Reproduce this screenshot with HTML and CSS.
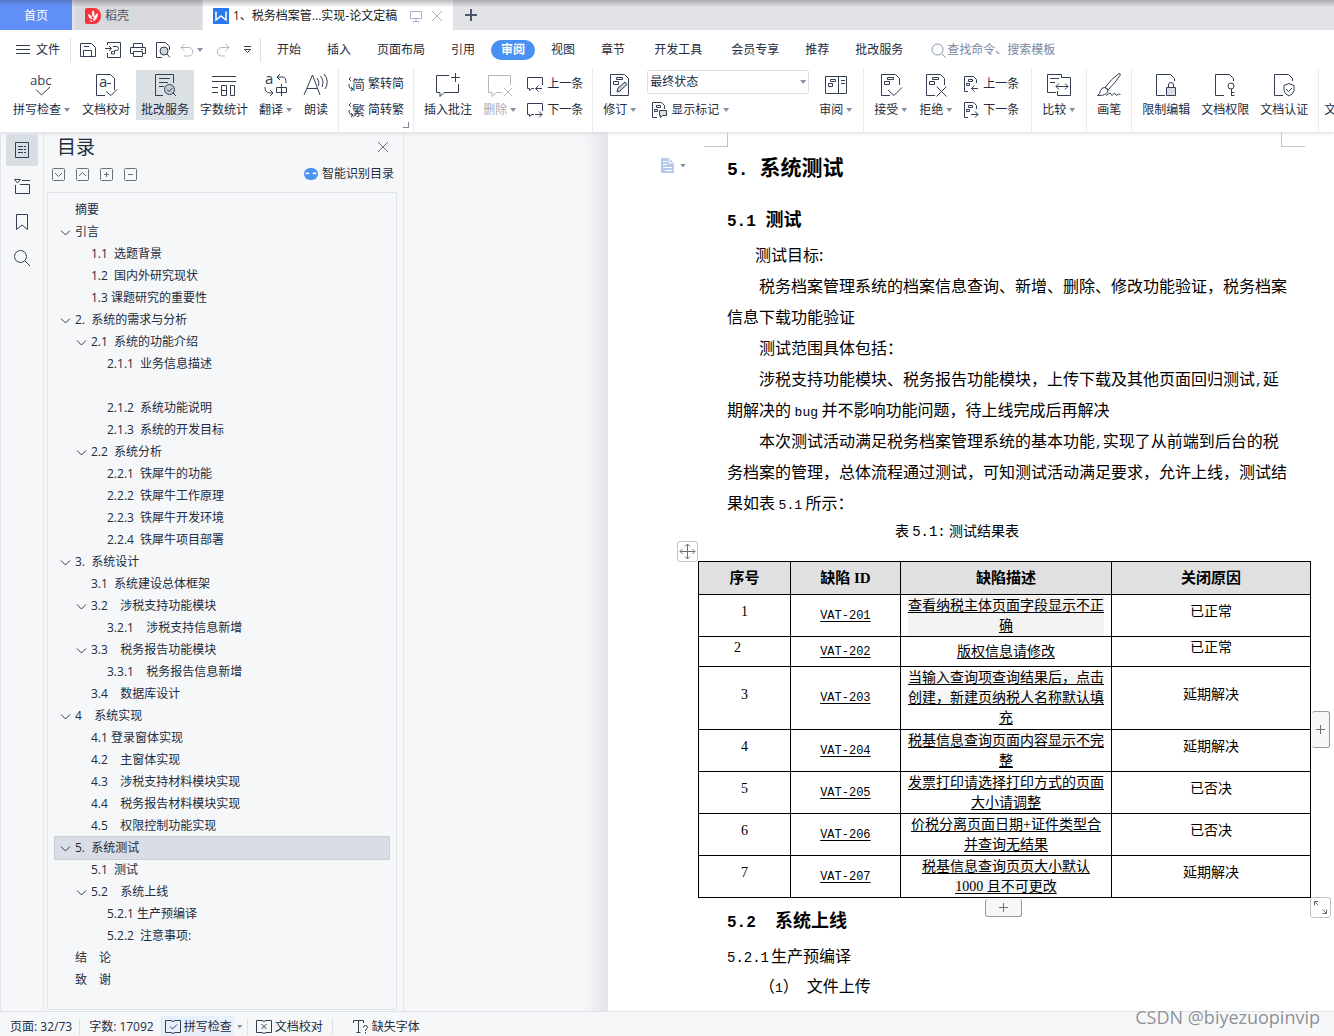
FILE: index.html
```html
<!DOCTYPE html>
<html lang="zh-CN">
<head>
<meta charset="utf-8">
<title>税务档案管理系统 - 论文定稿</title>
<link rel="stylesheet" href="styles.css">
</head>
<body>
<svg class="defs" aria-hidden="true">
  <symbol id="i-doc" viewBox="0 0 24 24"><path d="M11 22.500H2.500V1.500h14l4 4V12"/><path d="M5.500 8.500h5v3h-5zM8.500 4.500h6v2h-6z"/></symbol>
  <symbol id="i-page" viewBox="0 0 24 24"><path d="M11 22.500H2.500V1.500h14l4 4V8"/></symbol>
  <symbol id="i-chev" viewBox="0 0 16 16"><path d="M4 6.500l4.500 4.500L13 6.500"/></symbol>
  <symbol id="i-prev" viewBox="0 0 16 16"><path d="M7 12.500H5l-2.500 2v-2H.5V1.500h15V9M15 12.500H8.500M11.500 9.500l-3 3 3 3"/></symbol>
  <symbol id="i-next" viewBox="0 0 16 16"><path d="M7 12.500H5l-2.500 2v-2H.5V1.500h15V9M8 12.500h7M12 9.500l3 3-3 3"/></symbol>
  <symbol id="i-dprev" viewBox="0 0 16 16"><path d="M5 15.500H1.500V.5h9l3 3V7M5.500 3.500h4v2h-4zM3.500 7.500h3v2h-3zM15 12.500H8.500M11.500 9.500l-3 3 3 3"/></symbol>
  <symbol id="i-dnext" viewBox="0 0 16 16"><path d="M5 15.500H1.500V.5h9l3 3V7M5.500 3.500h4v2h-4zM3.500 7.500h3v2h-3zM8 12.500h7M12 9.500l3 3-3 3"/></symbol>
</svg>

<header>
  <nav class="tabs">
    <button class="tab tab-home">首页</button>
    <button class="tab tab-docer">
      <svg width="16" height="16" viewBox="0 0 16 16"><path d="M0 2q0-2 2-2h7a7 8 0 0 1 0 16H2q-2 0-2-2z" fill="#f5313c"/><path d="M8 2c2 2 2 5 .3 7.500C6.500 7 6.500 4.500 8 2zM3 6c2.500.5 4 2.500 4.500 5.500C5 11 3 9 3 6zM13 5c0 4-1.500 7-5 8.500 0-4 2-7 5-8.500zM4 11.500l4 2.500H6z" fill="#fff"/></svg>稻壳
    </button>
    <div class="tab tab-current">
      <svg width="16" height="16" viewBox="0 0 16 16"><path d="M0 0h16v16H0z" fill="#2878ee"/><path d="M3 3.500v8.500l5-4 5 4V3.500M8 8v0" fill="none" stroke="#fff" stroke-width="1.500"/></svg>
      <span class="tab-title">1、税务档案管...实现-论文定稿</span>
      <svg class="line pale" width="12" height="12" viewBox="0 0 12 12"><path d="M.5 1.500h11v7H.5zM6 8.500v3M3 11.500h6"/></svg>
      <button class="plain" aria-label="关闭标签"><svg class="line pale" width="12" height="12" viewBox="0 0 12 12"><path d="M1 1l10 10M11 1L1 11"/></svg></button>
    </div>
    <button class="plain tab-new" aria-label="新建标签"><svg width="12" height="12" viewBox="0 0 12 12"><path d="M6 0v12M0 6h12" stroke="#4b5670" stroke-width="2"/></svg></button>
  </nav>

  <div class="menubar">
    <button class="plain file"><svg class="line" width="14" height="12" viewBox="0 0 14 12"><path d="M0 1.500h14M0 5.500h14M0 9.500h14"/></svg>文件</button>
    <div class="quick">
      <button class="plain" aria-label="保存"><svg class="line" width="16" height="16" viewBox="0 0 16 16"><path d="M.5 1.500h11l4 4v9H.5zM3.500 14V8.500h8V14M4 4.500h5"/></svg></button>
      <button class="plain" aria-label="输出为PDF"><svg class="line" width="16" height="16" viewBox="0 0 16 16"><path d="M2.500 3V.5h13v15h-13V11M0 6.500h6M4 4l2.500 2.500L4 9M8 4.500h3.500a2 2 0 0 1 0 4H9.500V12H6.500V9.500h2"/></svg></button>
      <button class="plain" aria-label="打印"><svg class="line" width="16" height="16" viewBox="0 0 16 16"><path d="M3.500 5V1.500h9V5M3 11.500H.5v-6h15v6H13M3.500 9.500h9v5h-9zM11 7.500h2"/></svg></button>
      <button class="plain" aria-label="打印预览"><svg class="line" width="16" height="16" viewBox="0 0 16 16"><path d="M7 15.500H1.500V.5h9l4 4V8"/><circle cx="9" cy="9" r="4" fill="#cfd4dc"/><path d="M12 12l3 3.500"/></svg></button>
      <button class="plain undo" aria-label="撤销"><svg class="line grey" width="14" height="14" viewBox="0 0 14 14"><path d="M4.500 1L1 4.500 4.500 8M1 4.500h7.500a4.200 4.200 0 0 1 0 8.500H4"/></svg><i class="caret"></i></button>
      <button class="plain redo" aria-label="恢复"><svg class="line grey" width="14" height="14" viewBox="0 0 14 14"><path d="M9.500 1L13 4.500 9.500 8M13 4.500H5.500a4.200 4.200 0 0 0 0 8.500H9"/></svg></button>
      <button class="plain" aria-label="自定义"><svg class="line" width="9" height="8" viewBox="0 0 9 8"><path d="M1 .5h7M1.500 3.500h6l-3 3z"/></svg></button>
    </div>
    <nav class="menus">
      <button class="plain">开始</button>
      <button class="plain">插入</button>
      <button class="plain">页面布局</button>
      <button class="plain">引用</button>
      <button class="plain on">审阅</button>
      <button class="plain">视图</button>
      <button class="plain">章节</button>
      <button class="plain wide">开发工具</button>
      <button class="plain">会员专享</button>
      <button class="plain">推荐</button>
      <button class="plain">批改服务</button>
    </nav>
    <label class="search">
      <svg class="line" width="15" height="15" viewBox="0 0 15 15"><circle cx="6.500" cy="6.500" r="5.500"/><path d="M10.500 10.500l4 4"/></svg>
      <input type="text" placeholder="查找命令、搜索模板" aria-label="查找命令">
    </label>
  </div>

  <div class="ribbon">
    <div class="group">
      <button class="big"><svg class="line" width="24" height="24" viewBox="0 0 24 24"><text x="0" y="12" class="glyph abc">abc</text><path d="M6 16.500l5.500 5.500L20 14"/></svg><span>拼写检查<i class="caret"></i></span></button>
      <button class="big"><svg class="line" width="24" height="24" viewBox="0 0 24 24"><path d="M11 22.500H2.500V1.500h14l4 4V17M12 18.500l5 4 6-6M13 10.500h4"/><text x="5" y="14" class="glyph">a</text></svg><span>文档校对</span></button>
      <button class="big active"><svg class="line" width="24" height="24" viewBox="0 0 24 24"><path d="M10 22.500H2.500V1.500h18V10M6 5.500h11M6 9.500h9M6 13.500h5"/><circle cx="16.500" cy="16.500" r="5" fill="#c4cbd5"/><path d="M14 16.500l2 2 3.500-3.500M20 20l3 3"/></svg><span>批改服务</span></button>
      <button class="big"><svg class="line" width="24" height="24" viewBox="0 0 24 24"><path d="M0 3.500h24M0 8.500h24M0 14.500h6M0 19.500h6M9.500 12.500h5v10h-5zM9.500 17.500h5M18.500 12.500h4v10h-4z"/></svg><span>字数统计</span></button>
      <button class="big"><svg class="line" width="24" height="24" viewBox="0 0 24 24"><text x="1" y="11" class="glyph">a</text><path d="M16 1l-3 3 3 3M13 4h6q3 0 3 6M1 14c0 5 2 6 7 6M6 17l3 3-3 3M12.500 14.500h10v5h-10zM17.500 11v12"/></svg><span>翻译<i class="caret"></i></span></button>
      <button class="big"><svg class="line" width="24" height="24" viewBox="0 0 24 24"><path d="M0 22L8.500 2 16 22M3 15.500h10.500M13 5q3 4 1.500 8M16.500 3q4 5 1.500 11M20 1q6 7 1 15"/></svg><span>朗读</span></button>
    </div>
    <div class="group stack corner">
      <button class="small"><svg class="line" width="16" height="16" viewBox="0 0 16 16"><text x="4" y="13" class="glyph cjk">简</text><path d="M3 1L1 3l2 2M1 8q0 5 3 5M3 11l2 2-2 2"/></svg>繁转简</button>
      <button class="small"><svg class="line" width="16" height="16" viewBox="0 0 16 16"><text x="4" y="13" class="glyph cjk">繁</text><path d="M3 1L1 3l2 2M1 8q0 5 3 5M3 11l2 2-2 2"/></svg>简转繁</button>
    </div>
    <div class="group">
      <button class="big"><svg class="line" width="24" height="24" viewBox="0 0 24 24"><path d="M13 2.500H.5v17H4v4l4-4h14.500V11M19.500 0v9M15 4.500h9"/></svg><span>插入批注</span></button>
      <button class="big off"><svg class="line grey" width="24" height="24" viewBox="0 0 24 24"><path d="M22.500 12V2.500H.5v17H4v4l4-4h6M16 15l8 8M24 15l-8 8"/></svg><span>删除<i class="caret"></i></span></button>
      <div class="stack">
        <button class="small"><svg class="line" width="16" height="16"><use href="#i-prev"/></svg>上一条</button>
        <button class="small"><svg class="line" width="16" height="16"><use href="#i-next"/></svg>下一条</button>
      </div>
    </div>
    <div class="group">
      <button class="big"><svg class="line" width="24" height="24" viewBox="0 0 24 24"><path d="M2.500 1.500h14l4 4v17h-18zM8.500 4.500h6v2h-6zM5.500 8.500h5v3h-5z"/><path d="M9 19l1-4 7-6 2 2.500-7 6.500z" fill="#c9ced6"/></svg><span>修订<i class="caret"></i></span></button>
      <div class="stack marks">
        <span class="picker"><select aria-label="显示状态"><option>最终状态</option></select><i class="caret"></i></span>
        <button class="small"><svg class="line" width="16" height="16" viewBox="0 0 16 16"><path d="M6 15.500H1.500V.5h9l3 3V7M5.500 3.500h4v2h-4zM3.500 7.500h3v2h-3z"/><path d="M8.500 8.500h7v5h-4l-2 2v-2h-1z" fill="#d9dde3"/></svg>显示标记<i class="caret"></i></button>
      </div>
      <button class="big review"><svg class="line" width="24" height="24" viewBox="0 0 24 24"><path d="M1.500 3.500h21v17h-21zM14.500 3v18M6.500 6.500h5v2h-5zM4.500 10.500h4v3h-4zM17 7.500h4M17 10.500h4"/></svg><span>审阅<i class="caret"></i></span></button>
    </div>
    <div class="group">
      <button class="big"><svg class="line" width="24" height="24" viewBox="0 0 24 24"><use href="#i-doc"/><path d="M9 17l6 5.500 8-8"/></svg><span>接受<i class="caret"></i></span></button>
      <button class="big"><svg class="line" width="24" height="24" viewBox="0 0 24 24"><use href="#i-doc"/><path d="M12.500 13.500l10 10M22.500 13.500l-10 10"/></svg><span>拒绝<i class="caret"></i></span></button>
      <div class="stack far">
        <button class="small"><svg class="line" width="16" height="16"><use href="#i-dprev"/></svg>上一条</button>
        <button class="small"><svg class="line" width="16" height="16"><use href="#i-dnext"/></svg>下一条</button>
      </div>
    </div>
    <div class="group">
      <button class="big"><svg class="line" width="24" height="24" viewBox="0 0 24 24"><path d="M9 19.500H.5v-18h14V5M3 5.500h9M3 9.500h5M14 4.500h9.500v18h-13V18M9 13.500h12M12 10.500l-3 3 3 3M18 10.500l3 3-3 3"/></svg><span>比较<i class="caret"></i></span></button>
    </div>
    <div class="group">
      <button class="big"><svg class="line" width="24" height="24" viewBox="0 0 24 24"><path d="M8 14.500Q14 6 22 .5q2 0 1 2Q18 10 11 17z"/><path d="M7.500 14.500q3.500 0 3.500 3.500-2 5-10.500 4.500 3-2 3-5 1-3 4-3zM9 22.500l4-2.500 2 2.500 2.500-2.500 2 2.500 2-1.500 2 .5"/></svg><span>画笔</span></button>
    </div>
    <div class="group">
      <button class="big"><svg class="line" width="24" height="24" viewBox="0 0 24 24"><use href="#i-page"/><path d="M12.500 14.500h9v8h-9z" fill="#d9dde3"/><path d="M14.500 14v-2q0-2.500 2.500-2.500t2.500 2.500v2"/></svg><span>限制编辑</span></button>
      <button class="big"><svg class="line" width="24" height="24" viewBox="0 0 24 24"><use href="#i-page"/><circle cx="18" cy="13" r="3"/><path d="M18.500 16v7M18.500 19.500h3M18.500 22.500h3"/></svg><span>文档权限</span></button>
      <button class="big"><svg class="line" width="24" height="24" viewBox="0 0 24 24"><use href="#i-page"/><path d="M17 10.500l5 2v5q-1 4-5 5.500-4-1.500-5-5.500v-5zM14 16l2.500 2.500L20 15"/></svg><span>文档认证</span></button>
    </div>
    <div class="group last">
      <button class="big"><svg class="line" width="24" height="24"></svg><span>文档加密</span></button>
    </div>
  </div>
</header>

<main>
  <nav class="rail">
    <button class="plain on" aria-label="目录"><svg class="line" width="16" height="16" viewBox="0 0 16 16"><path d="M1.500.5h13v15h-13zM4 4.500h5M10 4.500h2M4 7.500h5M10 7.500h2M4 10.500h5M10 10.500h2"/></svg></button>
    <button class="plain" aria-label="章节"><svg class="line" width="16" height="16" viewBox="0 0 16 16"><path d="M.5 1.500h6l-3 3.500zM8 2.500h8M1.500 7v8.500h14v-9H6"/></svg></button>
    <button class="plain" aria-label="书签"><svg class="line" width="16" height="16" viewBox="0 0 16 16"><path d="M2.500.5h11v15L8 11l-5.500 4.500z"/></svg></button>
    <button class="plain" aria-label="查找"><svg class="line" width="16" height="16" viewBox="0 0 16 16"><circle cx="6.500" cy="6.500" r="6"/><path d="M11 11l5 5"/></svg></button>
  </nav>

  <aside class="outline">
    <div class="outline-head">
      <h2>目录</h2>
      <button class="plain" aria-label="关闭目录"><svg class="line soft" width="10" height="10" viewBox="0 0 10 10"><path d="M0 0l10 10M10 0L0 10"/></svg></button>
    </div>
    <div class="outline-tools">
      <button class="plain" aria-label="展开"><svg class="line soft" width="13" height="13" viewBox="0 0 13 13"><rect x=".5" y=".5" width="12" height="12" rx="1"/><path d="M3 5l3.500 3.500L10 5"/></svg></button>
      <button class="plain" aria-label="收起"><svg class="line soft" width="13" height="13" viewBox="0 0 13 13"><rect x=".5" y=".5" width="12" height="12" rx="1"/><path d="M3 8l3.500-3.500L10 8"/></svg></button>
      <button class="plain" aria-label="增加级别"><svg class="line soft" width="13" height="13" viewBox="0 0 13 13"><rect x=".5" y=".5" width="12" height="12" rx="1"/><path d="M4 6.500h5M6.500 4v5"/></svg></button>
      <button class="plain" aria-label="减少级别"><svg class="line soft" width="13" height="13" viewBox="0 0 13 13"><rect x=".5" y=".5" width="12" height="12" rx="1"/><path d="M4 6.500h5"/></svg></button>
      <button class="plain smart"><svg width="14" height="14" viewBox="0 0 14 14"><rect y="1" width="14" height="12" rx="6" fill="#4a94f3"/><path d="M2 7q1.500-2 3 0M9 7q1.500-2 3 0" fill="none" stroke="#fff" stroke-width="1.500"/></svg>智能识别目录</button>
    </div>
    <ul class="tree">
      <li><a href="#">摘要</a></li>
      <li class="open"><svg><use href="#i-chev"/></svg><a href="#">引言</a></li>
      <li class="l2"><a href="#">1.1  选题背景</a></li>
      <li class="l2"><a href="#">1.2  国内外研究现状</a></li>
      <li class="l2"><a href="#">1.3 课题研究的重要性</a></li>
      <li class="open"><svg><use href="#i-chev"/></svg><a href="#">2.  系统的需求与分析</a></li>
      <li class="l2 open"><svg><use href="#i-chev"/></svg><a href="#">2.1  系统的功能介绍</a></li>
      <li class="l3"><a href="#">2.1.1  业务信息描述</a></li>
      <li></li>
      <li class="l3"><a href="#">2.1.2  系统功能说明</a></li>
      <li class="l3"><a href="#">2.1.3  系统的开发目标</a></li>
      <li class="l2 open"><svg><use href="#i-chev"/></svg><a href="#">2.2  系统分析</a></li>
      <li class="l3"><a href="#">2.2.1  铁犀牛的功能</a></li>
      <li class="l3"><a href="#">2.2.2  铁犀牛工作原理</a></li>
      <li class="l3"><a href="#">2.2.3  铁犀牛开发环境</a></li>
      <li class="l3"><a href="#">2.2.4  铁犀牛项目部署</a></li>
      <li class="open"><svg><use href="#i-chev"/></svg><a href="#">3.  系统设计</a></li>
      <li class="l2"><a href="#">3.1  系统建设总体框架</a></li>
      <li class="l2 open"><svg><use href="#i-chev"/></svg><a href="#">3.2    涉税支持功能模块</a></li>
      <li class="l3"><a href="#">3.2.1    涉税支持信息新增</a></li>
      <li class="l2 open"><svg><use href="#i-chev"/></svg><a href="#">3.3    税务报告功能模块</a></li>
      <li class="l3"><a href="#">3.3.1    税务报告信息新增</a></li>
      <li class="l2"><a href="#">3.4    数据库设计</a></li>
      <li class="open"><svg><use href="#i-chev"/></svg><a href="#">4    系统实现</a></li>
      <li class="l2"><a href="#">4.1 登录窗体实现</a></li>
      <li class="l2"><a href="#">4.2    主窗体实现</a></li>
      <li class="l2"><a href="#">4.3    涉税支持材料模块实现</a></li>
      <li class="l2"><a href="#">4.4    税务报告材料模块实现</a></li>
      <li class="l2"><a href="#">4.5    权限控制功能实现</a></li>
      <li class="open current"><svg><use href="#i-chev"/></svg><a href="#">5.  系统测试</a></li>
      <li class="l2"><a href="#">5.1  测试</a></li>
      <li class="l2 open"><svg><use href="#i-chev"/></svg><a href="#">5.2    系统上线</a></li>
      <li class="l3"><a href="#">5.2.1 生产预编译</a></li>
      <li class="l3"><a href="#">5.2.2  注意事项:</a></li>
      <li><a href="#">结　论</a></li>
      <li><a href="#">致　谢</a></li>
    </ul>
  </aside>

  <section class="canvas">
    <article class="page">
      <i class="crop crop-left"></i><i class="crop crop-right"></i>
      <button class="plain para-tool" aria-label="段落布局"><svg width="13" height="15" viewBox="0 0 13 15"><path d="M0 0h8l5 5v10H0z" fill="#b5c9e8"/><path d="M8 0v5h5M2 3.500h4M2 6.500h4M2 9.500h9M4 12.500h7" stroke="#fff" fill="none"/></svg><i class="caret"></i></button>

      <h1><span class="num">5.</span>系统测试</h1>
      <h2><span class="num">5.1 </span>测试</h2>
      <p class="goal">测试目标:</p>
      <p>税务档案管理系统的档案信息查询、新增、删除、修改功能验证，税务档案<br>信息下载功能验证</p>
      <p>测试范围具体包括：</p>
      <p>涉税支持功能模块、税务报告功能模块，上传下载及其他页面回归测试<span class="num">,</span>延<br>期解决的 <span class="num">bug</span> 并不影响功能问题，待上线完成后再解决</p>
      <p>本次测试活动满足税务档案管理系统的基本功能<span class="num">,</span>实现了从前端到后台的税<br>务档案的管理，总体流程通过测试，可知测试活动满足要求，允许上线，测试结<br>果如表 <span class="num">5.1</span> 所示：</p>

      <div class="figure">
        <p class="caption">表 <span class="num">5.1:</span> 测试结果表</p>
        <table>
          <colgroup><col class="c1"><col class="c2"><col class="c3"><col class="c4"></colgroup>
          <thead><tr><th>序号</th><th>缺陷 ID</th><th>缺陷描述</th><th>关闭原因</th></tr></thead>
          <tbody>
            <tr><td class="up">1</td><td class="code"><u>VAT-201</u></td><td class="desc shade"><u>查看纳税主体页面字段显示不正确</u></td><td class="up">已正常</td></tr>
            <tr class="short"><td class="up second">2</td><td class="code"><u>VAT-202</u></td><td class="desc"><u>版权信息请修改</u></td><td class="up">已正常</td></tr>
            <tr class="tall"><td class="up">3</td><td class="code"><u>VAT-203</u></td><td class="desc"><u class="mark">当输入查询项查询结果后，点击创建，新建页纳税人名称默认填充</u></td><td class="up">延期解决</td></tr>
            <tr><td class="up">4</td><td class="code"><u>VAT-204</u></td><td class="desc"><u class="mark">税基信息查询页面内容显示不完整</u></td><td class="up">延期解决</td></tr>
            <tr><td class="up">5</td><td class="code"><u>VAT-205</u></td><td class="desc"><u>发票打印请选择打印方式的页面大小请调整</u></td><td class="up">已否决</td></tr>
            <tr><td class="up">6</td><td class="code"><u>VAT-206</u></td><td class="desc"><u>价税分离页面日期+证件类型合并查询无结果</u></td><td class="up">已否决</td></tr>
            <tr><td class="up">7</td><td class="code"><u>VAT-207</u></td><td class="desc"><u class="mark">税基信息查询页页大小默认<br>1000 且不可更改</u></td><td class="up">延期解决</td></tr>
          </tbody>
        </table>
        <button class="handle move" aria-label="移动表格"><svg class="line soft" width="15" height="15" viewBox="0 0 15 15"><path d="M7.500 0v15M0 7.500h15M5 2.500L7.500 0 10 2.500M5 12.500L7.500 15l2.500-2.500M2.500 5L0 7.500 2.500 10M12.500 5L15 7.500 12.500 10"/></svg></button>
        <button class="handle add-col" aria-label="添加列"><svg class="line soft" width="9" height="9" viewBox="0 0 9 9"><path d="M4.500 0v9M0 4.500h9"/></svg></button>
        <button class="handle add-row" aria-label="添加行"><svg class="line soft" width="9" height="9" viewBox="0 0 9 9"><path d="M4.500 0v9M0 4.500h9"/></svg></button>
        <button class="handle resize" aria-label="调整表格大小"><svg class="line soft" width="13" height="13" viewBox="0 0 13 13"><path d="M.5 4.500v-4h4M.5.5l4 4M12.500 8.500v4h-4M12.500 12.500l-4-4"/></svg></button>
      </div>

      <h2 class="launch"><span class="num">5.2  </span>系统上线</h2>
      <h3><span class="num">5.2.1</span>生产预编译</h3>
      <p>（<span class="num">1</span>）<span class="num"> </span>文件上传</p>
    </article>
  </section>
</main>

<footer>
  <span class="cell">页面: 32/73</span>
  <span class="cell">字数: 17092</span>
  <span class="cell spell"><button class="plain"><svg class="line" width="16" height="14" viewBox="0 0 16 14"><path d="M6 .5H.5v12H6l2 1 2-1h5.500V.5H10l-2 1zM5 6.500L7.500 9 12 4.500"/></svg>拼写检查</button><i class="caret"></i></span>
  <span class="cell proof"><button class="plain"><svg class="line" width="16" height="14" viewBox="0 0 16 14"><path d="M6 .5H.5v12H6l2 1 2-1h5.500V.5H10l-2 1zM5.500 4l5 5M10.500 4l-5 5"/></svg>文档校对</button></span>
  <span class="cell fonts"><button class="plain"><svg class="line" width="16" height="14" viewBox="0 0 16 14"><path d="M.5 3V.5h10V3M5.500.5v12M3.500 12.500h4M10.500 7.500q0-2 2-2t2 2q0 1-2 2.500V11M12.500 12v1.500"/></svg>缺失字体</button></span>
</footer>
<div class="watermark">CSDN @biyezuopinvip</div>
</body>
</html>
```
FILE: styles.css
```css
* { box-sizing: border-box; }

body {
  margin: 0;
  height: 100vh;
  display: flex;
  flex-direction: column;
  position: relative;
  overflow: hidden;
  background: #f5f7f9;
  color: #222c3e;
  font: 12px/18px "Open Sans", "Noto Sans CJK SC", sans-serif;
}

button, input, select { font: inherit; color: inherit; }
h1, h2, h3, p, ul { margin: 0; padding: 0; }
svg { flex: none; display: block; overflow: visible; }
.defs { position: absolute; width: 0; height: 0; }

.plain {
  display: flex;
  align-items: center;
  padding: 0;
  border: 0;
  background: none;
  white-space: nowrap;
}

.line { fill: none; stroke: #333e52; stroke-width: 1; }
.pale { stroke: #a5b0c8; }
.grey { stroke: #b4b6ba; }
.soft { stroke: #6a6f78; }

.glyph {
  fill: #333e52;
  stroke: none;
  font: 15px "Open Sans", sans-serif;
}
.abc { font-size: 13px; }
.cjk { font: 13px "Noto Sans CJK SC", sans-serif; }

.caret {
  flex: none;
  width: 7px;
  height: 4px;
  margin-left: 3px;
  background: #8791a6;
  clip-path: polygon(0 0, 6px 0, 3px 4px);
}

/* document tabs */
.tabs {
  display: flex;
  height: 30px;
  background: linear-gradient(#a9aaad, #e2e3e7 7px);
}
.tab {
  display: flex;
  align-items: center;
  padding: 2px 10px 0;
  border: 0;
  white-space: nowrap;
}
.tab-home {
  width: 72px;
  justify-content: center;
  margin-right: 3px;
  color: #fff;
  background: linear-gradient(#5679c8, #608ff5 6px);
}
.tab-docer {
  width: 126px;
  gap: 4px;
  margin-right: 2px;
  color: #4c5360;
  background: linear-gradient(#a2a3a6, #d8d9dc 7px);
}
.tab-current {
  width: 250px;
  gap: 4px;
  background: linear-gradient(#bbb, #fff 7px);
  color: #151b26;
}
.tab-title { flex: 1; }
.tab-current .plain { margin-left: 5px; }
.tab-new { padding: 0 12px; }

/* menu row */
.menubar {
  display: flex;
  align-items: center;
  height: 38px;
  padding-top: 2px;
  background: #fff;
}
.file { gap: 6px; padding-left: 16px; }
.quick {
  display: flex;
  align-items: center;
  gap: 9px;
  height: 24px;
  margin-left: 10px;
  padding: 0 8px 0 9px;
  border: solid #dfe1e6;
  border-width: 0 1px;
}
.redo { margin: 0 4px 0 3px; }
.menus { display: flex; gap: 26px; margin-left: 16px; }
.menus .wide { margin: 0 3px; }
.menus .on {
  height: 20px;
  padding: 0 10px;
  margin: 0 -10px;
  border-radius: 10px;
  color: #fff;
  font-weight: bold;
  background: #4890f2;
}
.search {
  display: flex;
  align-items: center;
  gap: 1px;
  margin-left: 28px;
}
.search .line { stroke: #8892a8; }
.search input {
  width: 140px;
  padding: 0;
  border: 0;
  background: none;
}
.search input::placeholder { color: #7b869e; opacity: 1; }

/* ribbon */
.ribbon {
  display: flex;
  height: 64px;
  overflow: hidden;
  background: #fff;
  padding-left: 3px;
}
header { position: relative; z-index: 1; box-shadow: 0 1px 4px #d4d7dc; }
.group {
  position: relative;
  display: flex;
  flex: none;
  gap: 1px;
  padding: 2px 5px 0;
  border-right: 1px solid #e9ebee;
}
.last { padding-left: 0; border: 0; }
.big {
  display: flex;
  flex-direction: column;
  align-items: center;
  gap: 4px;
  height: 50px;
  padding: 3px 5px 0;
  border: 0;
  background: none;
}
.big span { display: flex; align-items: center; white-space: nowrap; }
.big.active { background: #dbe0e5; }
.big.off { color: #a9abb0; }
.stack { display: flex; flex-direction: column; gap: 8px; margin: 0 4px; padding-top: 5px; }
.group.stack { margin: 0; padding: 7px 9px 0; }
.stack.far { margin-right: 7px; }
.corner::after {
  content: "";
  position: absolute;
  right: 4px;
  bottom: 4px;
  width: 5px;
  height: 5px;
  border: solid #7d8798;
  border-width: 0 1px 1px 0;
}
.small {
  display: flex;
  align-items: center;
  gap: 4px;
  height: 18px;
  padding: 0;
  border: 0;
  background: none;
  white-space: nowrap;
}
.small .caret { margin-left: 0; }
.marks.stack { padding-top: 0; gap: 7px; }
.marks .small { margin-left: 4px; }
.picker { display: flex; align-items: center; position: relative; }
.picker select {
  width: 162px;
  height: 24px;
  padding: 0 2px;
  border: 1px solid #dcdfe4;
  border-radius: 2px;
  background: #fff;
  appearance: none;
}
.picker .caret { position: absolute; right: 2px; pointer-events: none; }

/* workspace */
main { display: flex; flex: 1; min-height: 0; }
.rail {
  display: flex;
  flex: none;
  flex-direction: column;
  gap: 4px;
  width: 44px;
  padding: 2px 5px;
  border: solid #e3e5ea;
  border-width: 0 1px;
}
.rail .plain {
  width: 32px;
  height: 32px;
  justify-content: center;
  border-radius: 2px;
}
.rail .on { background: #d9dee5; }

.outline {
  display: flex;
  flex: none;
  flex-direction: column;
  width: 360px;
  padding: 0 6px 1px 3px;
  border-right: 1px solid #e3e5ea;
}
.outline-head {
  display: flex;
  justify-content: space-between;
  align-items: center;
  height: 30px;
  padding: 0 9px 0 10px;
}
.outline-head h2 { font-size: 19px; line-height: 28px; font-weight: 400; }
.outline-tools {
  display: flex;
  align-items: center;
  gap: 11px;
  height: 24px;
  padding: 0 3px 0 5px;
  margin-bottom: 6px;
}
.smart { gap: 4px; margin-left: auto; }
.tree {
  flex: 1;
  padding: 6px 7px 0;
  border: 1px solid #e0e3e8;
  border-radius: 2px;
  list-style: none;
}
.tree li {
  display: flex;
  align-items: center;
  height: 22px;
  padding-left: 20px;
}
.tree li svg { width: 16px; height: 16px; fill: none; stroke: #333e52; }
.tree .open { padding-left: 2px; gap: 2px; }
.tree .l2 { padding-left: 36px; }
.tree .l2.open { padding-left: 18px; }
.tree .l3 { padding-left: 52px; }
.tree .current { background: #d9dde5; outline: 1px solid #c9d0da; }
.tree a { color: inherit; text-decoration: none; white-space: pre; }

.canvas {
  flex: 1;
  min-width: 0;
  display: flex;
  padding-left: 204px;
  background: linear-gradient(90deg, #f5f7f9 180px, #e2e4e7 204px);
}

/* document page */
.page {
  position: relative;
  flex: 1;
  min-width: 0;
  padding: 16px 53px 0 119px;
  background: #fff;
  color: #000;
  font: 16px/31px "Noto Sans CJK SC", sans-serif;
}
.page > p { text-indent: 32px; white-space: nowrap; }
.page > .goal { text-indent: 28px; }
.num { font-family: "Liberation Mono", monospace; font-size: 13px; line-height: 1; white-space: pre; }
h1 { font-size: 21px; line-height: 36px; }
h1 .num { font-size: 18px; padding-right: 11px; }
.page h2 { font-size: 18px; line-height: 40px; margin: 14px 0 1px; }
h2 .num { font-size: 16px; }
.page .launch { line-height: 42px; margin: 0; }
h3 { font-size: 16px; line-height: 30px; font-weight: 400; }
h3 .num { font-size: 14px; padding-right: 2px; }

.crop {
  position: absolute;
  top: 0;
  width: 24px;
  height: 15px;
  border: 0 solid #c2c4c8;
  border-bottom-width: 1px;
}
.crop-left { left: 96px; border-right-width: 1px; }
.crop-right { right: 29px; border-left-width: 1px; }
.para-tool { position: absolute; left: 53px; top: 26px; gap: 3px; }

.figure { position: relative; margin: 0 -30px 0 -29px; font-size: 14px; line-height: 21px; }
.caption { padding-left: 197px; line-height: 24px; margin-bottom: 19px; }
.caption .num { font-size: 14px; }
table { width: 100%; table-layout: fixed; border-collapse: collapse; }
.c1 { width: 15%; }
.c2 { width: 18%; }
.c3 { width: 211px; }
th, td { border: 1px solid #000; padding: 0; text-align: center; font-family: "Liberation Serif", "Noto Sans CJK SC", serif; }
th { height: 33px; font-size: 15px; background: #e0e0e0; }
td { height: 42px; }
.short td { height: 30px; }
.tall td { height: 63px; }
.up { padding-bottom: 8px; }
.second { padding-right: 14px; }
.code { font: 12px/20px "Liberation Mono", monospace; }
.desc { padding: 0 6px; line-height: 20px; }
u { text-underline-offset: 2px; }
.shade { background: linear-gradient(#f3f3f3, #f3f3f3) center / 196px 40px no-repeat; }
.mark { background: #f6f6f6; }

.handle {
  position: absolute;
  display: flex;
  align-items: center;
  justify-content: center;
  padding: 0;
  border: 1px solid #bfc1c5;
  border-radius: 3px;
  background: #fff;
}
.move { left: -21px; top: 23px; width: 21px; height: 21px; }
.add-col { right: -19px; top: 193px; width: 18px; height: 37px; border-left: 0; border-color: #999; background: #f7f7f7; }
.add-row { left: 287px; bottom: -19px; width: 37px; height: 18px; border-top: 0; border-color: #999; background: #f7f7f7; }
.resize { right: -20px; bottom: -20px; width: 21px; height: 21px; }

/* status bar */
footer {
  display: flex;
  align-items: center;
  height: 25px;
  padding: 5px 0 0 1px;
  border-top: 1px solid #dfe2e7;
  background: #f5f7f9;
}
.cell {
  display: flex;
  align-items: center;
  height: 16px;
  padding: 0 7px 0 9px;
  border-right: 1px solid #dcdfe5;
}
.cell .plain { gap: 3px; }
.spell { padding: 0 3px 0 0; }
.spell .plain { height: 22px; padding: 0 2px 0 3px; background: #e7f0fb; }
.proof { padding: 0 9px 0 8px; }
.fonts { border: 0; padding-left: 20px; }

.watermark {
  position: absolute;
  z-index: 2;
  right: 14px;
  bottom: 7px;
  color: #8e9196;
  font: 18px/24px "Open Sans", sans-serif;
  text-shadow: 0 0 2px #fff;
}
```
